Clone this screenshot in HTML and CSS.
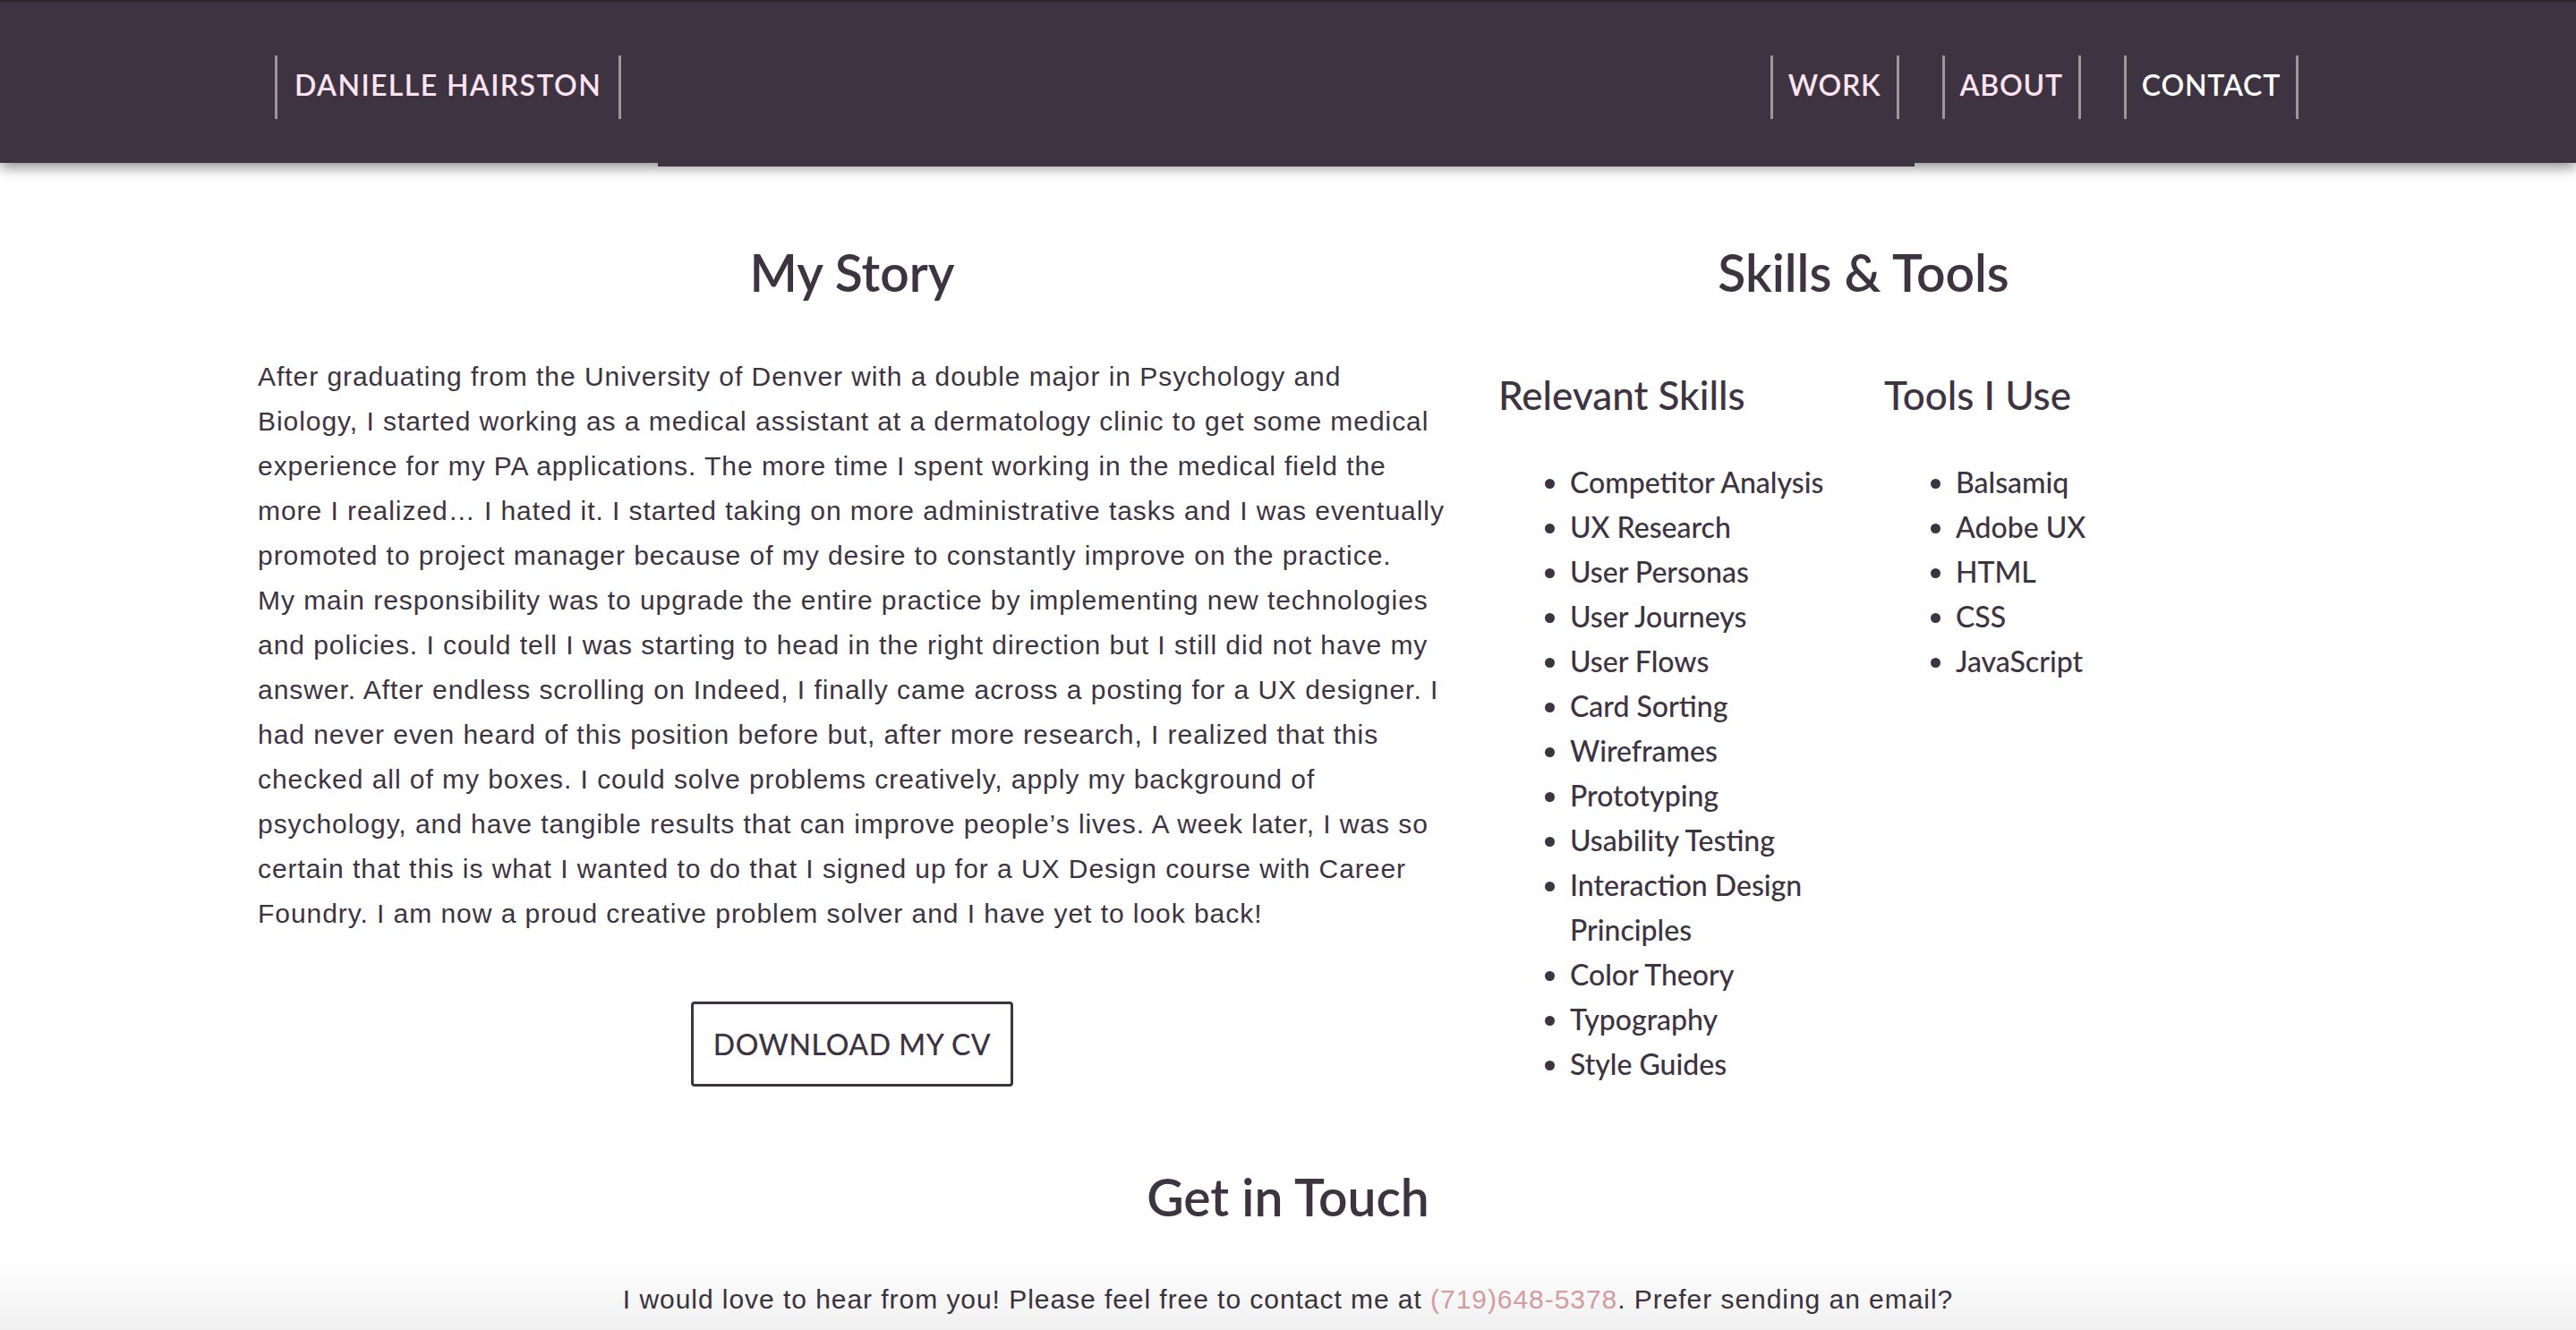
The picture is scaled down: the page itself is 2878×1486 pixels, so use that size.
FILE: index.html
```html
<!DOCTYPE html>
<html lang="en">
<head>
<meta charset="utf-8">
<title>Danielle Hairston - About</title>
<link rel="stylesheet" href="styles.css">
</head>
<body>
<header class="site-header">
  <nav class="nav">
    <a class="nav-item brand" href="#">DANIELLE HAIRSTON</a>
    <ul class="nav-links">
      <li><a class="nav-item" href="#">WORK</a></li>
      <li><a class="nav-item" href="#">ABOUT</a></li>
      <li><a class="nav-item active" href="#">CONTACT</a></li>
    </ul>
  </nav>
</header>
<main class="content">
  <section class="about">
    <div class="story">
      <h2 class="section-title">My Story</h2>
      <p class="story-text">After graduating from the University of Denver with a double major in Psychology and Biology, I started working as a medical assistant at a dermatology clinic to get some medical experience for my PA applications. The more time I spent working in the medical field the more I realized… I hated it. I started taking on more administrative tasks and I was eventually promoted to project manager because of my desire to constantly improve on the practice.<br>My main responsibility was to upgrade the entire practice by implementing new technologies and policies. I could tell I was starting to head in the right direction but I still did not have my answer. After endless scrolling on Indeed, I finally came across a posting for a UX designer. I had never even heard of this position before but, after more research, I realized that this checked all of my boxes. I could solve problems creatively, apply my background of psychology, and have tangible results that can improve people’s lives. A week later, I was so certain that this is what I wanted to do that I signed up for a UX Design course with Career Foundry. I am now a proud creative problem solver and I have yet to look back!</p>
      <div class="cv-wrap"><a class="cv-button" href="#">DOWNLOAD MY CV</a></div>
    </div>
    <div class="skills">
      <h2 class="section-title">Skills &amp; Tools</h2>
      <div class="skill-cols">
        <div class="skill-col">
          <h3 class="sub-title">Relevant Skills</h3>
          <ul class="skill-list">
            <li>Competitor Analysis</li>
            <li>UX Research</li>
            <li>User Personas</li>
            <li>User Journeys</li>
            <li>User Flows</li>
            <li>Card Sorting</li>
            <li>Wireframes</li>
            <li>Prototyping</li>
            <li>Usability Testing</li>
            <li>Interaction Design Principles</li>
            <li>Color Theory</li>
            <li>Typography</li>
            <li>Style Guides</li>
          </ul>
        </div>
        <div class="skill-col">
          <h3 class="sub-title">Tools I Use</h3>
          <ul class="skill-list">
            <li>Balsamiq</li>
            <li>Adobe UX</li>
            <li>HTML</li>
            <li>CSS</li>
            <li>JavaScript</li>
          </ul>
        </div>
      </div>
    </div>
  </section>
  <section class="contact">
    <h2 class="section-title">Get in Touch</h2>
    <p class="contact-text">I would love to hear from you! Please feel free to contact me at <a class="phone" href="#">(719)648-5378</a>. Prefer sending an email?</p>
  </section>
</main>
<div class="bottom-fade"></div>
</body>
</html>
```
FILE: styles.css
```css
html, body {
  margin: 0;
  background: #ffffff;
}

body {
  font-family: "Liberation Sans", Arial, sans-serif;
  color: #3d3341;
}

.site-header {
  position: relative;
  height: 180px;
  border-top: 2px solid #2a282b;
  background: #3d3341;
  box-shadow: 0 5px 14px rgba(0, 0, 0, 0.45);
  z-index: 2;
}

.site-header::after {
  content: "";
  position: absolute;
  left: 735px;
  width: 1404px;
  top: 100%;
  height: 4px;
  background: #3d3341;
}

.nav {
  display: flex;
  justify-content: space-between;
  align-items: flex-start;
  padding: 60px 310px 0 307px;
}

.nav-links {
  display: flex;
  gap: 48px;
  margin: 0;
  padding: 0;
  list-style: none;
}

.nav-item {
  display: flex;
  align-items: center;
  box-sizing: border-box;
  height: 71px;
  padding: 0 17px 7px;
  border-left: 3px solid #9c969e;
  border-right: 3px solid #9c969e;
  font-family: Lato, "Noto Sans", sans-serif;
  font-size: 32px;
  font-weight: 600;
  color: #ffe3f1;
  text-decoration: none;
  letter-spacing: 0.8px;
}

.nav-item.brand {
  padding: 0 19px 7px;
  letter-spacing: 1.4px;
}

.nav-item.active {
  color: #ffffff;
}

.content {
  padding: 88px 0 60px;
}

.about {
  display: grid;
  grid-template-columns: 1328px 816px;
  column-gap: 58px;
  margin-left: 288px;
}

.section-title {
  margin: 0;
  font-family: Lato, "Noto Sans", sans-serif;
  font-size: 57px;
  font-weight: 600;
  line-height: 68px;
  text-align: center;
  color: #3d3341;
}

.story-text {
  margin: 58px 0 0;
  font-size: 30px;
  line-height: 50px;
  letter-spacing: 0.95px;
  color: #3d3341;
}

.cv-wrap {
  display: flex;
  justify-content: center;
  margin-top: 73px;
}

.cv-button {
  display: flex;
  align-items: center;
  height: 89px;
  padding: 0 22px;
  border: 3px solid #3d3341;
  border-radius: 4px;
  font-family: Lato, "Noto Sans", sans-serif;
  font-size: 32px;
  font-weight: 500;
  letter-spacing: 0.6px;
  color: #3d3341;
  text-decoration: none;
}

.skill-cols {
  display: grid;
  grid-template-columns: 401px 1fr;
  column-gap: 30px;
  margin-top: 78px;
}

.sub-title {
  margin: 0;
  font-family: Lato, "Noto Sans", sans-serif;
  font-size: 44px;
  font-weight: 500;
  line-height: 50px;
  color: #3d3341;
}

.skill-list {
  margin: 48px 0 0;
  padding-left: 80px;
  font-family: Lato, "Noto Sans", sans-serif;
  font-size: 32px;
  font-weight: 500;
  line-height: 50px;
  color: #3d3341;
}

.contact {
  margin-top: 89px;
  text-align: center;
}

.contact-text {
  margin: 56px 0 0;
  font-size: 30px;
  line-height: 50px;
  letter-spacing: 0.95px;
  color: #3d3341;
}

.phone {
  color: #d9a2a8;
  text-decoration: none;
}

.bottom-fade {
  position: fixed;
  left: 0;
  right: 0;
  bottom: 0;
  height: 80px;
  background: linear-gradient(to bottom, rgba(0, 0, 0, 0), rgba(0, 0, 0, 0.06));
  pointer-events: none;
}
```
